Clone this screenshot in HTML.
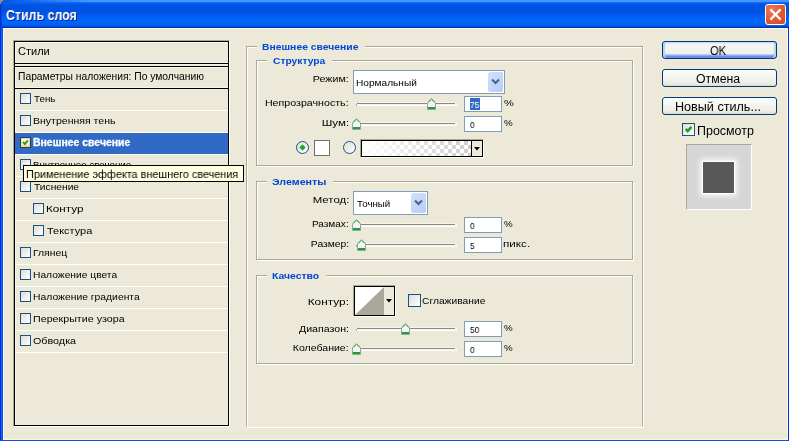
<!DOCTYPE html>
<html><head><meta charset="utf-8">
<style>
*{margin:0;padding:0;box-sizing:border-box}
html,body{width:789px;height:441px;overflow:hidden}
body{position:relative;background:#ECE9D8;font-family:"Liberation Sans",sans-serif;color:#000}
.a{position:absolute}
.t{position:absolute;white-space:nowrap;line-height:12px;will-change:transform}
.cb{position:absolute;width:13px;height:13px;border:1px solid #1C5180;background:linear-gradient(135deg,#DCDCD7 0%,#F2F2EE 60%,#FFFFFF 100%)}
.ln{position:absolute;height:1px}
.gb{position:absolute;border:1px solid #ACA899;box-shadow:1px 1px 0 #fff, inset 1px 1px 0 #fff}
.gm{position:absolute;height:12px;background:#ECE9D8}
.inp{position:absolute;height:16px;width:38px;border:1px solid #7F9DB9;background:#fff}
.btn{position:absolute;width:115px;height:18px;border:1px solid #003C74;border-radius:3px;background:linear-gradient(#FDFDFB,#F5F5F1 40%,#EEEDE7 80%,#DDDAD0)}
</style></head><body>
<div class="a" style="left:0;top:0;width:4px;height:4px;background:#8D918E"></div>
<div class="a" style="left:0;top:0;width:789px;height:28px;border-radius:4px 0 0 0;background:linear-gradient(#4796FF 0px,#4796FF 2px,#0A6FFF 2px,#0A6FFF 3px,#0060F0 3px,#0060F0 4px,#0057E5 4px,#0057E5 5px,#0053E0 5px,#0053E0 12px,#0059EA 14px,#0063F7 18px,#0065FA 22px,#0060F4 25px,#0060F4 26px,#0048D8 26px,#0048D8 27px,#0032B4 27px)"></div>
<div class="a" style="left:0;top:0;width:90px;height:3px;border-radius:4px 0 0 0;background:linear-gradient(90deg,#0550E0 0,#0A5CEA 12px,rgba(40,130,255,0) 90px)"></div>
<div class="a" style="left:0;top:4px;width:1px;height:24px;background:#0A2FD0"></div>
<svg class="a" style="left:0;top:0" width="4" height="4" shape-rendering="crispEdges"><rect x="0" y="0" width="3" height="1" fill="#8D918E"/><rect x="0" y="1" width="2" height="1" fill="#8D918E"/><rect x="0" y="2" width="1" height="2" fill="#8D918E"/><rect x="3" y="0" width="1" height="1" fill="#4C6FB0"/><rect x="1" y="2" width="1" height="1" fill="#3060C8"/></svg>
<div class="a" style="left:1px;top:3px;width:1px;height:25px;background:#0845E0"></div>
<div class="t" id="title" style="left:6.20px;transform-origin:0 0;top:6.00px;font-size:14px;font-weight:bold;color:#fff;transform:scaleX(0.8846);line-height:18px;text-shadow:1px 1px 0 #0A1E80">Стиль слоя</div>
<div class="a" style="left:765px;top:4px;width:21px;height:21px;border:1px solid #fff;border-radius:3px;background:radial-gradient(circle at 30% 25%,#EC7A58,#E25A32 50%,#D44A22)"></div>
<svg class="a" style="left:765px;top:4px" width="21" height="21"><path d="M6.2 6.2L14.8 14.8M14.8 6.2L6.2 14.8" stroke="#fff" stroke-width="2.3" stroke-linecap="square"/></svg>
<div class="a" style="left:0;top:28px;width:3px;height:413px;background:linear-gradient(90deg,#0030D8 0,#0030D8 1px,#1A62F4 1px,#1A62F4 2px,#0A50E8 2px)"></div>
<div class="a" style="left:0;top:440px;width:789px;height:1px;background:#0A50E8"></div>
<div class="a" style="left:788px;top:28px;width:1px;height:413px;background:#0030D8"></div>
<div class="a" style="left:3px;top:28px;width:785px;height:1px;background:#FFFBEE"></div>
<div class="a" style="left:3px;top:28px;width:1px;height:412px;background:#FFFBEE"></div>
<div class="a" style="left:3px;top:439px;width:785px;height:1px;background:#FFF6DA"></div>
<div class="a" style="left:787px;top:28px;width:1px;height:412px;background:#FFF6DA"></div>
<div class="a" style="left:13px;top:40px;width:217px;height:387px;border-top:1px solid #ACA899;border-left:1px solid #ACA899;border-right:1px solid #fff;border-bottom:1px solid #fff"></div>
<div class="a" style="left:14px;top:41px;width:215px;height:385px;border:1px solid #000"></div>
<div class="ln" style="left:15px;top:42px;width:212px;background:#FBF9F0"></div>
<div class="a" style="left:15px;top:42px;width:1px;height:382px;background:#F7F5EA"></div>
<div class="t" id="stili" style="left:18.00px;transform-origin:0 0;top:45.00px;font-size:11px;font-weight:normal;color:#000;">Стили</div>
<div class="ln" style="left:15px;top:62px;width:213px;background:#F7F5EA"></div>
<div class="ln" style="left:15px;top:63px;width:213px;background:#000"></div>
<div class="ln" style="left:15px;top:64px;width:213px;background:#F4F2E6"></div>
<div class="ln" style="left:15px;top:66px;width:213px;background:#000"></div>
<div class="ln" style="left:15px;top:67px;width:213px;background:#F7F5EA"></div>
<div class="t" id="params" style="left:18.00px;transform-origin:0 0;top:71.00px;font-size:10.3px;font-weight:normal;color:#000;">Параметры наложения: По умолчанию</div>
<div class="ln" style="left:15px;top:87px;width:213px;background:#F7F5EA"></div>
<div class="ln" style="left:15px;top:88px;width:213px;background:#000"></div>
<div class="ln" style="left:15px;top:110px;width:213px;background:#fff"></div>
<div class="ln" style="left:15px;top:132px;width:213px;background:#fff"></div>
<div class="ln" style="left:15px;top:154px;width:213px;background:#fff"></div>
<div class="ln" style="left:15px;top:176px;width:213px;background:#fff"></div>
<div class="ln" style="left:15px;top:198px;width:213px;background:#fff"></div>
<div class="ln" style="left:15px;top:220px;width:213px;background:#fff"></div>
<div class="ln" style="left:15px;top:242px;width:213px;background:#fff"></div>
<div class="ln" style="left:15px;top:264px;width:213px;background:#fff"></div>
<div class="ln" style="left:15px;top:286px;width:213px;background:#fff"></div>
<div class="ln" style="left:15px;top:308px;width:213px;background:#fff"></div>
<div class="ln" style="left:15px;top:330px;width:213px;background:#fff"></div>
<div class="ln" style="left:15px;top:352px;width:213px;background:#fff"></div>
<div class="a" style="left:15px;top:133px;width:213px;height:21px;background:#316AC5"></div>
<div class="cb" style="left:20px;top:93px;width:11px;height:11px"></div>
<div class="t" id="i_ten" style="left:33.80px;transform-origin:0 0;top:93.00px;font-size:9.75px;font-weight:normal;color:#000;transform:scaleX(1.0067);">Тень</div>
<div class="cb" style="left:20px;top:115px;width:11px;height:11px"></div>
<div class="t" id="i_vnten" style="left:33.00px;transform-origin:0 0;top:115.00px;font-size:9.75px;font-weight:normal;color:#000;transform:scaleX(1.0798);">Внутренняя тень</div>
<div class="cb" style="left:20px;top:137px;width:11px;height:11px;border-color:#1D3F75;background:linear-gradient(#FFF6DC,#FFFFFF 45%,#FBE3A0 80%,#F8B83C);box-shadow:inset 0 0 0 1px #FAD68A"></div>
<svg class="a" style="left:20px;top:137px" width="11" height="11"><path d="M3,4.8 L4.8,6.9 L8,3.3" fill="none" stroke="#21A121" stroke-width="2"/></svg>
<div class="t" id="i_vnesh" style="left:33.00px;transform-origin:0 0;top:137.00px;font-size:10px;font-weight:bold;color:#fff;transform:scaleX(1.0458);-webkit-text-stroke:0.3px #fff">Внешнее свечение</div>
<div class="cb" style="left:20px;top:159px;width:11px;height:11px"></div>
<div class="t" id="i_vnutr" style="left:33.00px;transform-origin:0 0;top:159.00px;font-size:9.75px;font-weight:normal;color:#000;">Внутреннее свечение</div>
<div class="cb" style="left:20px;top:181px;width:11px;height:11px"></div>
<div class="t" id="i_tisn" style="left:33.80px;transform-origin:0 0;top:181.00px;font-size:9.75px;font-weight:normal;color:#000;transform:scaleX(1.0499);">Тиснение</div>
<div class="cb" style="left:33px;top:203px;width:11px;height:11px"></div>
<div class="t" id="i_kont" style="left:46.00px;transform-origin:0 0;top:203.00px;font-size:9.75px;font-weight:normal;color:#000;transform:scaleX(1.1964);">Контур</div>
<div class="cb" style="left:33px;top:225px;width:11px;height:11px"></div>
<div class="t" id="i_tekst" style="left:46.80px;transform-origin:0 0;top:225.00px;font-size:9.75px;font-weight:normal;color:#000;transform:scaleX(1.1237);">Текстура</div>
<div class="cb" style="left:20px;top:247px;width:11px;height:11px"></div>
<div class="t" id="i_glyan" style="left:33.00px;transform-origin:0 0;top:247.00px;font-size:9.75px;font-weight:normal;color:#000;transform:scaleX(1.0654);">Глянец</div>
<div class="cb" style="left:20px;top:269px;width:11px;height:11px"></div>
<div class="t" id="i_nacv" style="left:33.00px;transform-origin:0 0;top:269.00px;font-size:9.75px;font-weight:normal;color:#000;transform:scaleX(1.0513);">Наложение цвета</div>
<div class="cb" style="left:20px;top:291px;width:11px;height:11px"></div>
<div class="t" id="i_nagr" style="left:33.00px;transform-origin:0 0;top:291.00px;font-size:9.75px;font-weight:normal;color:#000;transform:scaleX(1.0610);">Наложение градиента</div>
<div class="cb" style="left:20px;top:313px;width:11px;height:11px"></div>
<div class="t" id="i_perek" style="left:33.00px;transform-origin:0 0;top:313.00px;font-size:9.75px;font-weight:normal;color:#000;transform:scaleX(1.0969);">Перекрытие узора</div>
<div class="cb" style="left:20px;top:335px;width:11px;height:11px"></div>
<div class="t" id="i_obv" style="left:33.00px;transform-origin:0 0;top:335.00px;font-size:9.75px;font-weight:normal;color:#000;transform:scaleX(1.1031);">Обводка</div>
<div class="a" style="left:23px;top:165px;width:221px;height:17px;border:1px solid #000;background:#FFFFE1"></div>
<div class="t" id="tip" style="left:26.00px;transform-origin:0 0;top:168.00px;font-size:11px;font-weight:normal;color:#000;transform:scaleX(0.9860);line-height:13px">Применение эффекта внешнего свечения</div>
<div class="gb" style="left:246px;top:46px;width:397px;height:381px;border-bottom-color:#ECE9D8"></div>
<div class="gb" style="left:256px;top:60px;width:377px;height:106px"></div>
<div class="gb" style="left:256px;top:181px;width:377px;height:79px"></div>
<div class="gb" style="left:256px;top:275px;width:377px;height:89px"></div>
<div class="gm" style="left:257px;top:40px;width:108px"></div>
<div class="gm" style="left:267px;top:54px;width:65px"></div>
<div class="gm" style="left:267px;top:175px;width:66px"></div>
<div class="gm" style="left:267px;top:269px;width:59px"></div>
<div class="t" id="g_vnesh" style="left:262.20px;transform-origin:0 0;top:41.00px;font-size:9.5px;font-weight:bold;color:#0046D5;transform:scaleX(1.0900);">Внешнее свечение</div>
<div class="t" id="g_str" style="left:273.00px;transform-origin:0 0;top:55.00px;font-size:9.5px;font-weight:bold;color:#0046D5;transform:scaleX(1.0820);">Структура</div>
<div class="t" id="g_elem" style="left:272.20px;transform-origin:0 0;top:176.00px;font-size:9.5px;font-weight:bold;color:#0046D5;transform:scaleX(1.1240);">Элементы</div>
<div class="t" id="g_kach" style="left:272.20px;transform-origin:0 0;top:270.00px;font-size:9.5px;font-weight:bold;color:#0046D5;transform:scaleX(1.0930);">Качество</div>
<div class="t" id="l_rezh" style="right:440.20px;transform-origin:100% 0;top:73.00px;font-size:9.75px;font-weight:normal;color:#000;transform:scaleX(1.0966);">Режим:</div>
<div class="a" style="left:353px;top:70px;width:152px;height:24px;border:1px solid #7F9DB9;background:#fff"></div><div class="a" style="left:488px;top:72px;width:15px;height:20px;border-radius:2px;background:linear-gradient(135deg,#D4E1FC,#B7CBF8)"></div><svg class="a" style="left:489px;top:78px" width="13" height="8"><path d="M3,1.5 L6.5,5 L10,1.5" fill="none" stroke="#4D6185" stroke-width="2"/></svg>
<div class="t" id="c_norm" style="left:356.20px;transform-origin:0 0;top:77.00px;font-size:9.75px;font-weight:normal;color:#000;transform:scaleX(1.0374);">Нормальный</div>
<div class="t" id="l_nepr" style="right:440.20px;transform-origin:100% 0;top:97.00px;font-size:9.75px;font-weight:normal;color:#000;transform:scaleX(1.0928);">Непрозрачность:</div>
<svg class="a" style="left:356px;top:102px" width="101" height="5" shape-rendering="crispEdges"><rect x="2" y="0" width="97" height="1" fill="#F6F4EC"/><rect x="1" y="1" width="98" height="1" fill="#8A8984"/><rect x="1" y="2" width="99" height="1" fill="#F4F2EA"/><rect x="1" y="3" width="99" height="1" fill="#FFFFFF"/><rect x="0" y="2" width="1" height="2" fill="#A0B0BC"/><rect x="99" y="1" width="2" height="3" fill="#FBFAF6"/></svg>
<svg class="a" style="left:427px;top:98px" width="9" height="12"><polygon points="0.5,4.5 4.5,0.5 8.5,4.5 8.5,11.5 0.5,11.5" fill="#F4F4F0" stroke="#8EA2B2" stroke-width="1"/><path d="M1.5,4.5 L4.5,1.5 L7.5,4.5" fill="none" stroke="#4CC54C" stroke-width="1"/><rect x="1" y="9" width="7" height="2" fill="#21A121"/></svg>
<div class="inp" style="left:464px;top:96px"></div>
<div class="a" style="left:470px;top:98px;width:10px;height:12px;background:#316AC5"></div>
<div class="t" id="v_75" style="left:470.00px;transform-origin:0 0;top:99.00px;font-size:9.75px;font-weight:normal;color:#fff;transform:scaleX(0.8500);">75</div>
<div class="t" id="p1" style="left:504.00px;transform-origin:0 0;top:97.00px;font-size:9.75px;font-weight:normal;color:#000;transform:scaleX(1.1250);">%</div>
<div class="t" id="l_shum" style="right:440.20px;transform-origin:100% 0;top:117.00px;font-size:9.75px;font-weight:normal;color:#000;transform:scaleX(1.1838);">Шум:</div>
<svg class="a" style="left:356px;top:122px" width="101" height="5" shape-rendering="crispEdges"><rect x="2" y="0" width="97" height="1" fill="#F6F4EC"/><rect x="1" y="1" width="98" height="1" fill="#8A8984"/><rect x="1" y="2" width="99" height="1" fill="#F4F2EA"/><rect x="1" y="3" width="99" height="1" fill="#FFFFFF"/><rect x="0" y="2" width="1" height="2" fill="#A0B0BC"/><rect x="99" y="1" width="2" height="3" fill="#FBFAF6"/></svg>
<svg class="a" style="left:352px;top:118px" width="9" height="12"><polygon points="0.5,4.5 4.5,0.5 8.5,4.5 8.5,11.5 0.5,11.5" fill="#F4F4F0" stroke="#8EA2B2" stroke-width="1"/><path d="M1.5,4.5 L4.5,1.5 L7.5,4.5" fill="none" stroke="#4CC54C" stroke-width="1"/><rect x="1" y="9" width="7" height="2" fill="#21A121"/></svg>
<div class="inp" style="left:464px;top:116px"></div>
<div class="t" id="v_0a" style="left:470.00px;transform-origin:0 0;top:119.00px;font-size:9.75px;font-weight:normal;color:#000;transform:scaleX(0.8500);">0</div>
<div class="t" id="p2" style="left:504.00px;transform-origin:0 0;top:117.00px;font-size:9.75px;font-weight:normal;color:#000;">%</div>
<svg class="a" style="left:296px;top:141px" width="13" height="13"><defs><linearGradient id="rg" x1="0" y1="0" x2="1" y2="1"><stop offset="0" stop-color="#DCDCD7"/><stop offset="1" stop-color="#fff"/></linearGradient></defs><circle cx="6.5" cy="6.5" r="6" fill="url(#rg)" stroke="#1C5180" stroke-width="1"/><polygon points="6.5,4.2 8.8,6.5 6.5,8.8 4.2,6.5" fill="#21A121" stroke="#2AAE2A" stroke-width="1.2" stroke-linejoin="round"/></svg>
<div class="a" style="left:314px;top:140px;width:16px;height:16px;border:1px solid #707070;background:#fff"></div>
<svg class="a" style="left:343px;top:141px" width="13" height="13"><circle cx="6.5" cy="6.5" r="6" fill="url(#rg)" stroke="#1C5180" stroke-width="1"/></svg>
<div class="a" style="left:360px;top:139px;width:124px;height:19px;border-top:1px solid #ACA899;border-left:1px solid #ACA899;border-right:1px solid #fff;border-bottom:1px solid #fff"></div>
<div class="a" style="left:361px;top:140px;width:122px;height:17px;border:1px solid #000;background:#ECE9D8"></div>
<div class="a" style="left:362px;top:141px;width:109px;height:15px;background:linear-gradient(90deg,#fff,rgba(255,255,255,0)),repeating-conic-gradient(#CCCCCC 0 25%,#fff 0 50%) 2px 0/8px 8px"></div>
<div class="a" style="left:471px;top:141px;width:1px;height:15px;background:#000"></div>
<svg class="a" style="left:472px;top:141px" width="10" height="14"><path d="M2,6 L8,6 L5,9.5 Z" fill="#000"/></svg>
<div class="t" id="l_met" style="right:440.20px;transform-origin:100% 0;top:194.00px;font-size:9.75px;font-weight:normal;color:#000;transform:scaleX(1.1676);">Метод:</div>
<div class="a" style="left:353px;top:191px;width:75px;height:24px;border:1px solid #7F9DB9;background:#fff"></div><div class="a" style="left:411px;top:193px;width:15px;height:20px;border-radius:2px;background:linear-gradient(135deg,#D4E1FC,#B7CBF8)"></div><svg class="a" style="left:412px;top:199px" width="13" height="8"><path d="M3,1.5 L6.5,5 L10,1.5" fill="none" stroke="#4D6185" stroke-width="2"/></svg>
<div class="t" id="c_toch" style="left:357.00px;transform-origin:0 0;top:198.00px;font-size:9.75px;font-weight:normal;color:#000;">Точный</div>
<div class="t" id="l_razmah" style="right:440.20px;transform-origin:100% 0;top:218.00px;font-size:9.75px;font-weight:normal;color:#000;transform:scaleX(1.0311);">Размах:</div>
<svg class="a" style="left:356px;top:223px" width="101" height="5" shape-rendering="crispEdges"><rect x="2" y="0" width="97" height="1" fill="#F6F4EC"/><rect x="1" y="1" width="98" height="1" fill="#8A8984"/><rect x="1" y="2" width="99" height="1" fill="#F4F2EA"/><rect x="1" y="3" width="99" height="1" fill="#FFFFFF"/><rect x="0" y="2" width="1" height="2" fill="#A0B0BC"/><rect x="99" y="1" width="2" height="3" fill="#FBFAF6"/></svg>
<svg class="a" style="left:352px;top:219px" width="9" height="12"><polygon points="0.5,4.5 4.5,0.5 8.5,4.5 8.5,11.5 0.5,11.5" fill="#F4F4F0" stroke="#8EA2B2" stroke-width="1"/><path d="M1.5,4.5 L4.5,1.5 L7.5,4.5" fill="none" stroke="#4CC54C" stroke-width="1"/><rect x="1" y="9" width="7" height="2" fill="#21A121"/></svg>
<div class="inp" style="left:464px;top:217px"></div>
<div class="t" id="v_0b" style="left:470.00px;transform-origin:0 0;top:220.00px;font-size:9.75px;font-weight:normal;color:#000;transform:scaleX(0.8500);">0</div>
<div class="t" id="p3" style="left:504.00px;transform-origin:0 0;top:218.00px;font-size:9.75px;font-weight:normal;color:#000;">%</div>
<div class="t" id="l_razmer" style="right:440.20px;transform-origin:100% 0;top:238.00px;font-size:9.75px;font-weight:normal;color:#000;transform:scaleX(1.0597);">Размер:</div>
<svg class="a" style="left:356px;top:243px" width="101" height="5" shape-rendering="crispEdges"><rect x="2" y="0" width="97" height="1" fill="#F6F4EC"/><rect x="1" y="1" width="98" height="1" fill="#8A8984"/><rect x="1" y="2" width="99" height="1" fill="#F4F2EA"/><rect x="1" y="3" width="99" height="1" fill="#FFFFFF"/><rect x="0" y="2" width="1" height="2" fill="#A0B0BC"/><rect x="99" y="1" width="2" height="3" fill="#FBFAF6"/></svg>
<svg class="a" style="left:357px;top:239px" width="9" height="12"><polygon points="0.5,4.5 4.5,0.5 8.5,4.5 8.5,11.5 0.5,11.5" fill="#F4F4F0" stroke="#8EA2B2" stroke-width="1"/><path d="M1.5,4.5 L4.5,1.5 L7.5,4.5" fill="none" stroke="#4CC54C" stroke-width="1"/><rect x="1" y="9" width="7" height="2" fill="#21A121"/></svg>
<div class="inp" style="left:464px;top:237px"></div>
<div class="t" id="v_5" style="left:470.00px;transform-origin:0 0;top:240.00px;font-size:9.75px;font-weight:normal;color:#000;transform:scaleX(0.8500);">5</div>
<div class="t" id="piks" style="left:503.20px;transform-origin:0 0;top:238.00px;font-size:9.75px;font-weight:normal;color:#000;transform:scaleX(1.1963);">пикс.</div>
<div class="t" id="l_kont" style="right:440.20px;transform-origin:100% 0;top:296.00px;font-size:9.75px;font-weight:normal;color:#000;transform:scaleX(1.2146);">Контур:</div>
<div class="a" style="left:353px;top:285px;width:43px;height:32px;border-top:1px solid #ACA899;border-left:1px solid #ACA899;border-right:1px solid #fff;border-bottom:1px solid #fff"></div>
<div class="a" style="left:354px;top:286px;width:41px;height:30px;border:1px solid #000;background:#ECE9D8"></div>
<svg class="a" style="left:355px;top:287px" width="29" height="28"><rect width="29" height="28" fill="#fff"/><polygon points="0,28 29,0 29,28" fill="#ACA899"/></svg>
<svg class="a" style="left:384px;top:287px" width="10" height="28"><path d="M2,12 L8,12 L5,15.5 Z" fill="#000"/></svg>
<div class="cb" style="left:408px;top:294px;width:13px;height:13px"></div>
<div class="t" id="sglazh" style="left:422.00px;transform-origin:0 0;top:295.00px;font-size:9.75px;font-weight:normal;color:#000;transform:scaleX(1.0519);">Сглаживание</div>
<div class="t" id="l_diap" style="right:440.20px;transform-origin:100% 0;top:323.00px;font-size:9.75px;font-weight:normal;color:#000;transform:scaleX(1.0883);">Диапазон:</div>
<svg class="a" style="left:356px;top:327px" width="101" height="5" shape-rendering="crispEdges"><rect x="2" y="0" width="97" height="1" fill="#F6F4EC"/><rect x="1" y="1" width="98" height="1" fill="#8A8984"/><rect x="1" y="2" width="99" height="1" fill="#F4F2EA"/><rect x="1" y="3" width="99" height="1" fill="#FFFFFF"/><rect x="0" y="2" width="1" height="2" fill="#A0B0BC"/><rect x="99" y="1" width="2" height="3" fill="#FBFAF6"/></svg>
<svg class="a" style="left:401px;top:323px" width="9" height="12"><polygon points="0.5,4.5 4.5,0.5 8.5,4.5 8.5,11.5 0.5,11.5" fill="#F4F4F0" stroke="#8EA2B2" stroke-width="1"/><path d="M1.5,4.5 L4.5,1.5 L7.5,4.5" fill="none" stroke="#4CC54C" stroke-width="1"/><rect x="1" y="9" width="7" height="2" fill="#21A121"/></svg>
<div class="inp" style="left:464px;top:321px"></div>
<div class="t" id="v_50" style="left:470.00px;transform-origin:0 0;top:324.00px;font-size:9.75px;font-weight:normal;color:#000;transform:scaleX(0.8500);">50</div>
<div class="t" id="p4" style="left:504.00px;transform-origin:0 0;top:322.00px;font-size:9.75px;font-weight:normal;color:#000;">%</div>
<div class="t" id="l_koleb" style="right:440.20px;transform-origin:100% 0;top:342.00px;font-size:9.75px;font-weight:normal;color:#000;transform:scaleX(1.0811);">Колебание:</div>
<svg class="a" style="left:356px;top:347px" width="101" height="5" shape-rendering="crispEdges"><rect x="2" y="0" width="97" height="1" fill="#F6F4EC"/><rect x="1" y="1" width="98" height="1" fill="#8A8984"/><rect x="1" y="2" width="99" height="1" fill="#F4F2EA"/><rect x="1" y="3" width="99" height="1" fill="#FFFFFF"/><rect x="0" y="2" width="1" height="2" fill="#A0B0BC"/><rect x="99" y="1" width="2" height="3" fill="#FBFAF6"/></svg>
<svg class="a" style="left:352px;top:343px" width="9" height="12"><polygon points="0.5,4.5 4.5,0.5 8.5,4.5 8.5,11.5 0.5,11.5" fill="#F4F4F0" stroke="#8EA2B2" stroke-width="1"/><path d="M1.5,4.5 L4.5,1.5 L7.5,4.5" fill="none" stroke="#4CC54C" stroke-width="1"/><rect x="1" y="9" width="7" height="2" fill="#21A121"/></svg>
<div class="inp" style="left:464px;top:341px"></div>
<div class="t" id="v_0c" style="left:470.00px;transform-origin:0 0;top:344.00px;font-size:9.75px;font-weight:normal;color:#000;transform:scaleX(0.8500);">0</div>
<div class="t" id="p5" style="left:504.00px;transform-origin:0 0;top:342.00px;font-size:9.75px;font-weight:normal;color:#000;">%</div>
<div class="btn" style="left:662px;top:41px;background:linear-gradient(#CADDFD 0,#CADDFD 1px,#E2ECFD 1px,#E2ECFD 2px,#F6F6F3 2px,#F0F0EB 12px,#8CAAF6 13px,#8CAAF6 14px,#6C8DEF 14px);box-shadow:inset 2px 0 0 #B8D0FA,inset -2px 0 0 #B8D0FA"></div>
<div class="btn" style="left:662px;top:69px"></div>
<div class="btn" style="left:662px;top:97px"></div>
<div class="t" id="b_ok" style="left:710.20px;transform-origin:0 0;top:43.00px;font-size:12px;font-weight:normal;color:#000;transform:scaleX(0.9375);line-height:16px">OK</div>
<div class="t" id="b_otm" style="left:696.20px;transform-origin:0 0;top:71.00px;font-size:12px;font-weight:normal;color:#000;transform:scaleX(1.0238);line-height:16px">Отмена</div>
<div class="t" id="b_novy" style="left:675.20px;transform-origin:0 0;top:99.00px;font-size:12px;font-weight:normal;color:#000;transform:scaleX(1.0500);line-height:16px">Новый стиль...</div>
<div class="cb" style="left:682px;top:123px;width:13px;height:13px"></div><svg class="a" style="left:682px;top:123px" width="13" height="13"><path d="M3.8,5.9 L5.7,8.1 L9.5,3.9" fill="none" stroke="#21A121" stroke-width="2.5"/></svg>
<div class="t" id="prosm" style="left:697.00px;transform-origin:0 0;top:123.00px;font-size:12px;font-weight:normal;color:#000;transform:scaleX(1.0378);line-height:16px">Просмотр</div>
<div class="a" style="left:686px;top:144px;width:66px;height:66px;background:#D6D6D6;border-top:1px solid #ACA899;border-left:1px solid #ACA899;border-right:1px solid #fff;border-bottom:1px solid #fff"></div>
<div class="a" style="left:703px;top:162px;width:31px;height:31px;background:#585858;box-shadow:0 0 0 1px #fff,0 0 5px 3px rgba(255,255,255,0.85)"></div>
</body></html>
